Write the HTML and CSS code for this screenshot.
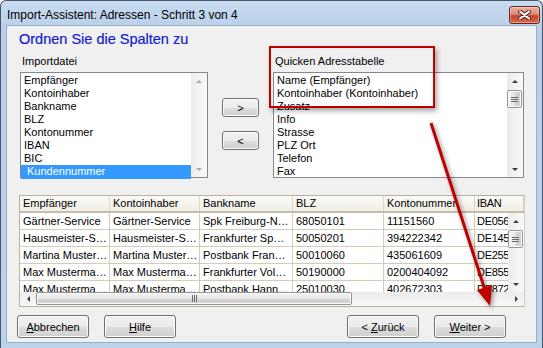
FILE: index.html
```html
<!DOCTYPE html>
<html lang="de">
<head>
    <meta charset="UTF-8">
    <title>Import-Assistent: Adressen - Schritt 3 von 4</title>
    <link rel="stylesheet" href="styles.css">
</head>
<body>
    <div class="window">
        <div class="titlebar">
            <span class="title">Import-Assistent: Adressen - Schritt 3 von 4</span>
            <span class="close">
                <svg width="13" height="10" viewBox="0 0 13 10">
                    <path d="M2 1.5 L11 8.5 M11 1.5 L2 8.5" stroke="#5a1e14" stroke-width="4" stroke-linecap="round"/>
                    <path d="M2 1.5 L11 8.5 M11 1.5 L2 8.5" stroke="#ffffff" stroke-width="2.2" stroke-linecap="round"/>
                </svg>
            </span>
        </div>

        <div class="client">
            <h1>Ordnen Sie die Spalten zu</h1>

            <div class="mapping">
                <div class="col left">
                    <div class="label">Importdatei</div>
                    <div class="listbox">
                        <ul class="items">
                            <li>Empfänger</li>
                            <li>Kontoinhaber</li>
                            <li>Bankname</li>
                            <li>BLZ</li>
                            <li>Kontonummer</li>
                            <li>IBAN</li>
                            <li>BIC</li>
                            <li class="selected">Kundennummer</li>
                        </ul>
                        <div class="vscroll disabled">
                            <span class="arrow up"></span>
                            <span class="track"></span>
                            <span class="arrow down"></span>
                        </div>
                    </div>
                </div>

                <div class="movers">
                    <button class="btn small">&gt;</button>
                    <button class="btn small">&lt;</button>
                </div>

                <div class="col right">
                    <div class="label">Quicken Adresstabelle</div>
                    <div class="listbox">
                        <ul class="items">
                            <li>Name (Empfänger)</li>
                            <li>Kontoinhaber (Kontoinhaber)</li>
                            <li>Zusatz</li>
                            <li>Info</li>
                            <li>Strasse</li>
                            <li>PLZ Ort</li>
                            <li>Telefon</li>
                            <li>Fax</li>
                        </ul>
                        <div class="vscroll">
                            <span class="arrow up"></span>
                            <span class="thumb"><i class="grip"></i></span>
                            <span class="track"></span>
                            <span class="arrow down"></span>
                        </div>
                    </div>
                </div>
            </div>

            <div class="grid">
                <div class="row head">
                    <span class="c1">Empfänger</span>
                    <span class="c2">Kontoinhaber</span>
                    <span class="c3">Bankname</span>
                    <span class="c4">BLZ</span>
                    <span class="c5">Kontonummer</span>
                    <span class="c6">IBAN</span>
                </div>
                <div class="grid-body">
                    <div class="rows">
                        <div class="row">
                            <span class="c1">Gärtner-Service</span>
                            <span class="c2">Gärtner-Service</span>
                            <span class="c3">Spk Freiburg-N…</span>
                            <span class="c4">68050101</span>
                            <span class="c5">11151560</span>
                            <span class="c6">DE056</span>
                        </div>
                        <div class="row">
                            <span class="c1">Hausmeister-S…</span>
                            <span class="c2">Hausmeister-S…</span>
                            <span class="c3">Frankfurter Sp…</span>
                            <span class="c4">50050201</span>
                            <span class="c5">394222342</span>
                            <span class="c6">DE145</span>
                        </div>
                        <div class="row">
                            <span class="c1">Martina Muster…</span>
                            <span class="c2">Martina Muster…</span>
                            <span class="c3">Postbank Fran…</span>
                            <span class="c4">50010060</span>
                            <span class="c5">435061609</span>
                            <span class="c6">DE255</span>
                        </div>
                        <div class="row">
                            <span class="c1">Max Musterma…</span>
                            <span class="c2">Max Musterma…</span>
                            <span class="c3">Frankfurter Vol…</span>
                            <span class="c4">50190000</span>
                            <span class="c5">0200404092</span>
                            <span class="c6">DE855</span>
                        </div>
                        <div class="row">
                            <span class="c1">Max Musterma…</span>
                            <span class="c2">Max Musterma…</span>
                            <span class="c3">Postbank Hann…</span>
                            <span class="c4">25010030</span>
                            <span class="c5">402672303</span>
                            <span class="c6">DE872</span>
                        </div>
                    </div>
                    <div class="vscroll">
                        <span class="arrow up"></span>
                        <span class="thumb"><i class="grip"></i></span>
                        <span class="track"></span>
                        <span class="arrow down"></span>
                    </div>
                </div>
                <div class="hscroll">
                    <span class="arrow left"></span>
                    <span class="thumb"><i class="grip"></i></span>
                    <span class="track"></span>
                    <span class="arrow right"></span>
                </div>
            </div>

            <div class="actions">
                <button class="btn"><u>A</u>bbrechen</button>
                <button class="btn"><u>H</u>ilfe</button>
                <span class="spacer"></span>
                <button class="btn">&lt; <u>Z</u>urück</button>
                <button class="btn"><u>W</u>eiter &gt;</button>
            </div>
        </div>

        <!-- annotation drawn over the dialog -->
        <div class="callout"></div>
        <svg class="pointer" width="543" height="348" viewBox="0 0 543 348">
            <line x1="431" y1="123" x2="485" y2="290" stroke="#c00000" stroke-width="3"/>
            <polygon points="490,306 477,290 492,285" fill="#c00000"/>
        </svg>
    </div>
</body>
</html>
```

FILE: styles.css
```css
html, body {
    margin: 0;
    background-color: #ffffff;
}
body {
    font-family: 'Liberation Sans', Arial, sans-serif;
    font-size: 11px;
    color: #000000;
}
.window {
    position: relative;
    width: 543px;
    height: 348px;
    box-sizing: border-box;
    border: 1px solid #45566b;
    border-bottom: none;
    border-radius: 6px 6px 0 0;
    background: linear-gradient(#c8dbf0, #b8cfe9 30px, #bcd3ec);
    padding: 0 5px 5px 5px;
    display: flex;
    flex-direction: column;
    overflow: hidden;
}
.titlebar {
    height: 24px;
    display: flex;
    align-items: center;
    justify-content: space-between;
    padding-left: 1px;
}
.title {
    font-size: 12px;
    margin-top: 3px;
}
.close {
    width: 29px;
    height: 16px;
    margin-top: 4px;
    margin-right: -3px;
    border: 1px solid #6b2418;
    border-radius: 3px;
    background: linear-gradient(#eab3a6, #dc8a77 45%, #c8432b 55%, #d66a4e);
    box-shadow: inset 0 0 0 1px rgba(255, 255, 255, 0.35);
    display: flex;
    align-items: center;
    justify-content: center;
}
.client {
    flex: 1;
    background-color: #f0f0f0;
    border: 1px solid #98aecb;
    padding: 0 11px 0 12px;
    display: flex;
    flex-direction: column;
}
h1 {
    margin: 4px 0 0 0;
    font-size: 14.5px;
    font-weight: normal;
    line-height: 18px;
    color: #1420cc;
    -webkit-text-stroke: 0.2px #1420cc;
}
.mapping {
    display: flex;
    margin-top: 7px;
}
.col.left {
    width: 188px;
    margin-left: 1px;
}
.col.right {
    width: 251px;
    margin-left: 14px;
}
.label {
    height: 13px;
    line-height: 13px;
    padding-left: 2px;
    margin-bottom: 4px;
}
.listbox {
    height: 104px;
    border: 1px solid #828790;
    background-color: #ffffff;
    display: flex;
}
.items {
    flex: 1;
    list-style: none;
    margin: 0;
    padding: 1px 0 0 0;
}
.items li {
    height: 13px;
    line-height: 13px;
    padding-left: 3px;
    white-space: nowrap;
}
.items li.selected {
    background-color: #3399ff;
    color: #ffffff;
    padding-left: 6px;
    height: 14px;
}
.movers {
    display: flex;
    flex-direction: column;
    gap: 14px;
    margin: 43px 0 0 14px;
}

/* scrollbars */
.vscroll {
    width: 16px;
    flex-shrink: 0;
    display: flex;
    flex-direction: column;
    background: linear-gradient(to right, #ececec, #f9f9f9);
}
.hscroll {
    height: 14px;
    display: flex;
    background: linear-gradient(#ececec, #f9f9f9);
}
.track {
    flex: 1;
}
.arrow {
    flex: 0 0 16px;
    display: flex;
    align-items: center;
    justify-content: center;
}
.arrow::before {
    content: "";
    border: 3px solid transparent;
}
.arrow.up::before {
    border-top: none;
    border-bottom: 3px solid #3c3c3c;
}
.arrow.down::before {
    border-bottom: none;
    border-top: 3px solid #3c3c3c;
}
.arrow.left::before {
    border-left: none;
    border-right: 3px solid #3c3c3c;
}
.arrow.right::before {
    border-right: none;
    border-left: 3px solid #3c3c3c;
}
.vscroll.disabled .arrow.up::before {
    border-bottom-color: #a8a8a8;
}
.vscroll.disabled .arrow.down::before {
    border-top-color: #a8a8a8;
}
.thumb {
    border: 1px solid #959595;
    border-radius: 2px;
    display: flex;
    align-items: center;
    justify-content: center;
    box-shadow: inset 0 0 0 1px #fbfbfb;
}
.vscroll .thumb {
    height: 16px;
    margin: 1px 1px 0 0;
    background: linear-gradient(to right, #f4f4f4, #e6e6e6 50%, #d6d6d6 51%, #cfcfcf);
}
.hscroll .thumb {
    width: 314px;
    margin: 0 0 1px 0;
    background: linear-gradient(#f4f4f4, #e6e6e6 50%, #d6d6d6 51%, #cfcfcf);
}
.vscroll .grip {
    width: 7px;
    height: 5px;
    background: repeating-linear-gradient(#6b6b6b 0 1px, transparent 1px 2px);
}
.hscroll .grip {
    width: 5px;
    height: 7px;
    background: repeating-linear-gradient(to right, #6b6b6b 0 1px, transparent 1px 2px);
}

/* data grid */
.grid {
    margin-top: 17px;
    border: 1px solid #b9b29c;
    border-right-color: #d2ccba;
    background-color: #ffffff;
}
.row {
    display: flex;
    height: 17px;
    border-bottom: 1px solid #d4ccb6;
    box-sizing: border-box;
}
.row span {
    flex-shrink: 0;
    box-sizing: border-box;
    border-right: 1px solid #d4ccb6;
    padding-left: 3px;
    line-height: 16px;
    white-space: nowrap;
    overflow: hidden;
}
.row span.c6 {
    padding-left: 2px;
    letter-spacing: -0.3px;
}
.row.head {
    background: linear-gradient(#fbfbf8, #efede4);
    border-bottom: 2px solid #c4bda8;
    height: 17px;
}
.row.head span {
    line-height: 15px;
    border-right-color: #ddd7c6;
}
.c1 { width: 90px; }
.c2 { width: 90px; }
.c3 { width: 93px; }
.c4 { width: 91px; }
.c5 { width: 91px; }
.c6 { width: 49px; }
.grid-body {
    display: flex;
    height: 79px;
}
.rows {
    flex: 1;
    overflow: hidden;
}

/* buttons */
.btn {
    font-family: 'Liberation Sans', Arial, sans-serif;
    font-size: 11px;
    color: #000000;
    width: 72px;
    height: 23px;
    padding: 0;
    border: 1px solid #707070;
    border-radius: 3px;
    background: linear-gradient(#f2f2f2, #ebebeb 50%, #dddddd 51%, #cfcfcf);
    box-shadow: inset 0 0 0 1px #fbfbfb;
}
.btn.small {
    width: 37px;
    height: 19px;
}
.actions {
    display: flex;
    gap: 15px;
    margin: 8px 19px 0 -2px;
}
.spacer {
    flex: 1;
}

/* red annotation */
.callout {
    position: absolute;
    left: 268px;
    top: 45px;
    width: 162px;
    height: 58px;
    border: 2px solid #c00000;
    box-shadow: 2px 3px 5px rgba(0, 0, 0, 0.35);
}
.pointer {
    position: absolute;
    left: -1px;
    top: -1px;
    filter: drop-shadow(2px 2px 2px rgba(0, 0, 0, 0.4));
}
```
